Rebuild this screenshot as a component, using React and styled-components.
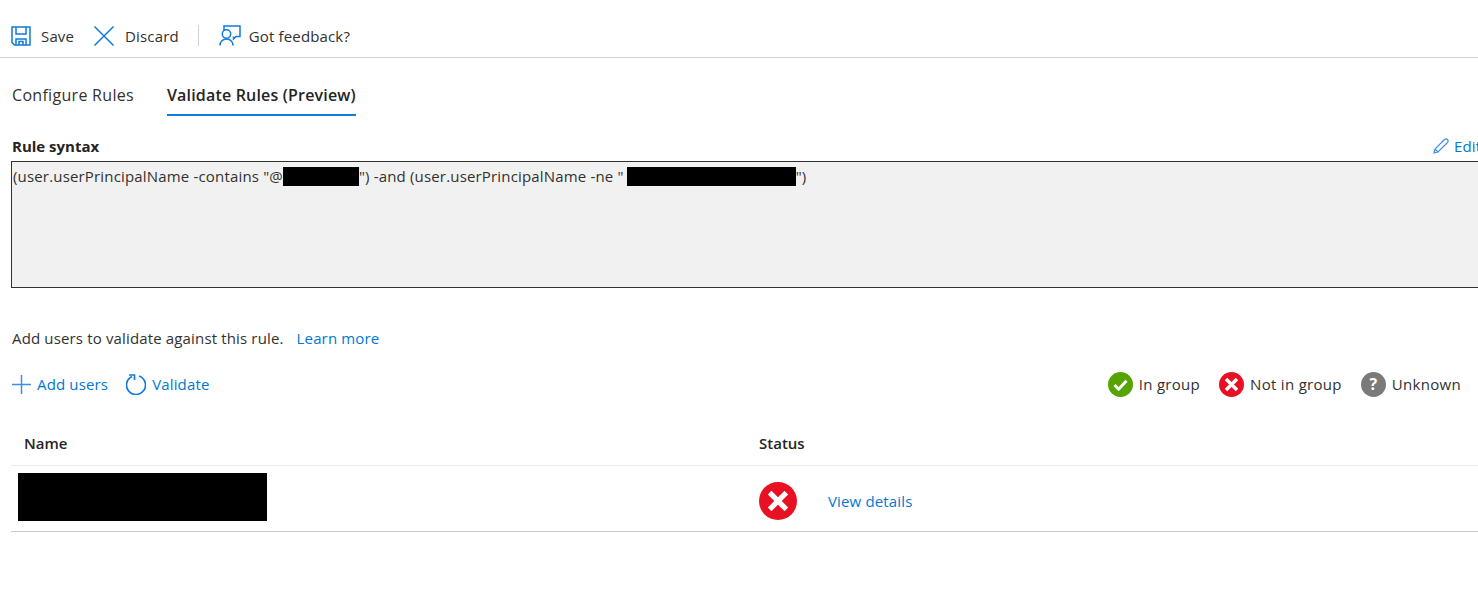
import styled, { createGlobalStyle } from "styled-components"

const GlobalStyle = createGlobalStyle`
  html, body {
    margin: 0;
    padding: 0;
    background: #fff;
    overflow: hidden;
  }
  body {
    font-family: "Open Sans", "Noto Sans", "Liberation Sans", sans-serif;
    font-size: 15px;
    letter-spacing: 0.15px;
    color: #323130;
  }
`

const Toolbar = styled.div`
  display: flex;
  align-items: center;
  height: 58px;
  padding: 14px 0 0 11px;
  box-sizing: border-box;
  border-bottom: 1px solid #d2d2d2;
  width: 1478px;
`

const ToolButton = styled.div`
  display: flex;
  align-items: center;
  gap: ${(p) => p.$inner || 10}px;
  margin-right: ${(p) => p.$gap || 0}px;
  white-space: nowrap;
`

const Divider = styled.div`
  width: 1px;
  height: 21px;
  background: #d2d2d2;
  margin: 0 20px 0 19px;
`

const Main = styled.div`
  width: 1500px;
  padding-left: 11px;
  box-sizing: border-box;
`

const Tabs = styled.div`
  display: flex;
  gap: 33px;
  margin-top: 23px;
  height: 35px;
  padding-left: 1px;
`

const Tab = styled.div`
  font-size: 16px;
  letter-spacing: ${(p) => (p.$active ? 0.18 : 0.3)}px;
  line-height: 28px;
  height: 35px;
  box-sizing: border-box;
  font-weight: ${(p) => (p.$active ? 600 : 400)};
  color: ${(p) => (p.$active ? "#252423" : "#323130")};
  border-bottom: 2px solid ${(p) => (p.$active ? "#0f7bdb" : "transparent")};
`

const RuleHeader = styled.div`
  display: flex;
  justify-content: space-between;
  align-items: center;
  margin-top: 17px;
  height: 26px;
  padding: 0 11px 2px 1px;
`

const RuleLabel = styled.div`
  font-weight: 700;
  letter-spacing: 0;
  color: #252423;
`

const EditLink = styled.div`
  display: flex;
  align-items: center;
  gap: 5px;
  color: #0078d4;
  width: 56px;
  overflow: hidden;
`

const RuleBox = styled.div`
  height: 127px;
  box-sizing: border-box;
  border: 1px solid #323130;
  background: #f1f1f1;
  padding: 4px 1px;
  line-height: 20px;
  letter-spacing: 0.17px;
  color: #323130;
  white-space: nowrap;
`

const Redacted = styled.span`
  display: inline-block;
  width: ${(p) => p.$width}px;
  height: 19px;
  margin-left: ${(p) => p.$before || 0}px;
  background: #000;
  vertical-align: -4px;
`

const HelpRow = styled.div`
  display: flex;
  gap: 13px;
  margin-top: 40px;
  line-height: 20px;
  padding-left: 1px;
`

const Link = styled.span`
  color: #0078d4;
`

const ActionRow = styled.div`
  display: flex;
  justify-content: space-between;
  align-items: center;
  width: 1450px;
  margin-top: 21px;
  height: 30px;
`

const Actions = styled.div`
  display: flex;
  align-items: center;
  gap: 18px;
  color: #0078d4;
  padding-left: 1px;
`

const ActionButton = styled.div`
  display: flex;
  align-items: center;
  gap: 6px;
`

const Legend = styled.div`
  display: flex;
  align-items: center;
  gap: 19px;
  letter-spacing: 0.3px;
`

const LegendItem = styled.div`
  display: flex;
  align-items: center;
  gap: 6px;
`

const Table = styled.div`
  margin-top: 25px;
`

const Row = styled.div`
  display: grid;
  grid-template-columns: 748px 1fr;
  align-items: center;
  height: ${(p) => p.$height}px;
  border-bottom: 1px solid ${(p) => p.$line};
  box-sizing: border-box;
`

const HeadCell = styled.div`
  font-weight: 600;
  letter-spacing: 0;
  color: #252423;
  padding: 0 0 3px ${(p) => p.$indent || 0}px;
`

const NameBlock = styled.div`
  width: 249px;
  height: 48px;
  margin: 0 0 3px 7px;
  background: #000;
`

const StatusCell = styled.div`
  display: flex;
  align-items: center;
  gap: 31px;
  padding-top: 4px;
`

const statusColors = { ok: "#57a300", bad: "#e81123", unknown: "#7a7a7a" }

const StatusIcon = ({ kind, size = 25 }) => (
  <svg width={size} height={size} viewBox="0 0 25 25" style={{ flexShrink: 0 }}>
    <circle cx="12.5" cy="12.5" r="12.5" fill={statusColors[kind]} />
    {kind === "ok" && (
      <path d="M6.5 13l4.2 4.2 7.8-8.4" fill="none" stroke="#fff" strokeWidth="3" />
    )}
    {kind === "bad" && (
      <path d="M7 7l11 11M18 7L7 18" fill="none" stroke="#fff" strokeWidth="3.4" />
    )}
    {kind === "unknown" && (
      <text x="12.5" y="18" textAnchor="middle" fontSize="16" fontWeight="700" fill="#fff" fontFamily="Open Sans, sans-serif">?</text>
    )}
  </svg>
)

const SaveIcon = () => (
  <svg width="20" height="20" viewBox="0 0 20 20" fill="none" stroke="#0f7bdb" strokeWidth="1.5">
    <path d="M1 1H19V19H3.5L1 16.5z" />
    <path d="M5 1v7h10V1" />
    <path d="M5 19v-6h10v6" />
    <path d="M8 19v-3.5h4V19" />
  </svg>
)

const CloseIcon = () => (
  <svg width="20" height="20" viewBox="0 0 20 20" fill="none" stroke="#0f7bdb" strokeWidth="1.5">
    <path d="M.5.5l19 19M19.5.5l-19 19" />
  </svg>
)

const FeedbackIcon = () => (
  <svg width="22" height="21" viewBox="0 0 22 21" fill="none" stroke="#0f7bdb" strokeWidth="1.5">
    <path d="M5 6V1H21V11.5H17L14.5 14V11.5" />
    <circle cx="7.5" cy="9" r="4.2" />
    <path d="M1 20.5c0-4 3-6.5 6.5-6.5s6.5 2.5 6.5 6.5" />
  </svg>
)

const PlusIcon = () => (
  <svg width="19" height="19" viewBox="0 0 19 19" stroke="#3f8fe8" strokeWidth="1.5">
    <path d="M9.5 0v19M0 9.5h19" />
  </svg>
)

const RefreshIcon = () => (
  <svg width="20" height="21" viewBox="0 0 20 21" fill="none" stroke="#0f7bdb" strokeWidth="1.7">
    <path d="M13 2A9.5 9.5 0 1 1 6 2.4" />
    <path d="M3 1h5.5v5" />
  </svg>
)

const PencilIcon = () => (
  <svg width="16" height="16" viewBox="0 0 16 16" fill="none" stroke="#3f8fe8" strokeWidth="1.2">
    <path d="M1 15l1-4L11.5 1.5a1.8 1.8 0 0 1 3 3L5 14z" />
    <path d="M2 11l3 3" />
  </svg>
)

const App = () => {
  return (
    <>
      <GlobalStyle />
      <Toolbar>
        <ToolButton $gap={20}><SaveIcon />Save</ToolButton>
        <ToolButton $inner={11}><CloseIcon />Discard</ToolButton>
        <Divider />
        <ToolButton $inner={8}><FeedbackIcon />Got feedback?</ToolButton>
      </Toolbar>
      <Main>
        <Tabs>
          <Tab>Configure Rules</Tab>
          <Tab $active>Validate Rules (Preview)</Tab>
        </Tabs>
        <RuleHeader>
          <RuleLabel>Rule syntax</RuleLabel>
          <EditLink><PencilIcon />Edit</EditLink>
        </RuleHeader>
        <RuleBox>
          (user.userPrincipalName -contains "@<Redacted $width={76} />") -and (user.userPrincipalName -ne "<Redacted $width={169} $before={3} />")
        </RuleBox>
        <HelpRow>
          <span>Add users to validate against this rule.</span>
          <Link>Learn more</Link>
        </HelpRow>
        <ActionRow>
          <Actions>
            <ActionButton><PlusIcon />Add users</ActionButton>
            <ActionButton><RefreshIcon />Validate</ActionButton>
          </Actions>
          <Legend>
            <LegendItem><StatusIcon kind="ok" />In group</LegendItem>
            <LegendItem><StatusIcon kind="bad" />Not in group</LegendItem>
            <LegendItem><StatusIcon kind="unknown" />Unknown</LegendItem>
          </Legend>
        </ActionRow>
        <Table>
          <Row $height={42} $line="#ebebeb">
            <HeadCell $indent={13}>Name</HeadCell>
            <HeadCell>Status</HeadCell>
          </Row>
          <Row $height={66} $line="#c8c8c8">
            <NameBlock />
            <StatusCell>
              <StatusIcon kind="bad" size={38} />
              <Link>View details</Link>
            </StatusCell>
          </Row>
        </Table>
      </Main>
    </>
  )
}

export default App
